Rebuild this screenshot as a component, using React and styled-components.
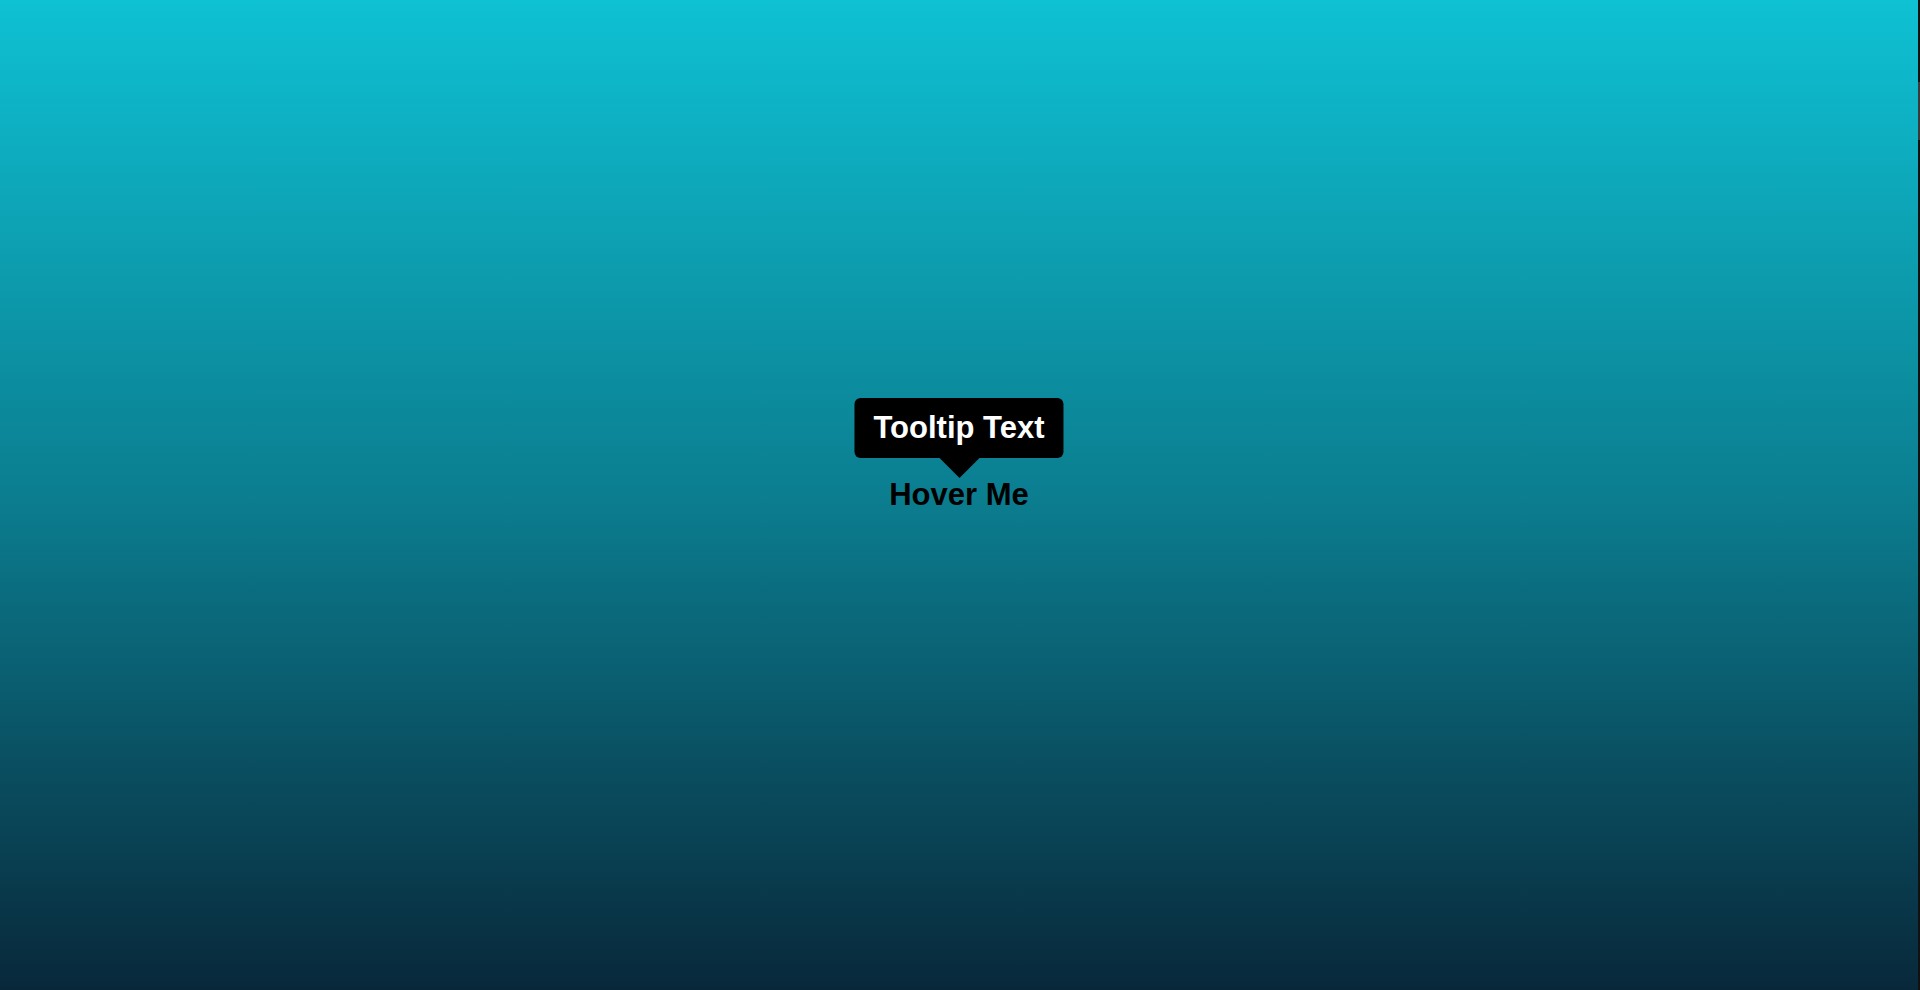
import React from 'react';
import styled, { createGlobalStyle } from 'styled-components';

const GlobalStyle = createGlobalStyle`
body {
  margin: 0;
  font-family: "Liberation Sans", Arial, sans-serif;
  overflow: hidden;
}
`

function App() {
  return (
    <>
      <GlobalStyle />
      <Screen>
        <Page>
          <Target>
            Hover Me
            <Tooltip>Tooltip Text</Tooltip>
          </Target>
        </Page>
        <Rail>
          <Thumb />
        </Rail>
      </Screen>
    </>
  )
}

export default App;

const Screen = styled.div`
display: flex;
height: 100vh;
`
const Page = styled.div`
flex: 1;
display: flex;
align-items: center;
justify-content: center;
background: linear-gradient(to bottom, #0ec1d3 0%, #0b7e90 50%, #08283a 100%);
`
const Rail = styled.div`
width: 2px;
background: #111;
`
const Thumb = styled.div`
margin-top: 82px;
height: 58px;
background: #3a3a3a;
`
const Target = styled.div`
position: relative;
font-size: 31px;
font-weight: 700;
color: #000;
cursor: pointer;
`
const Tooltip = styled.span`
position: absolute;
left: 50%;
bottom: calc(100% + 19px);
transform: translateX(-50%);
white-space: nowrap;
background: #000;
color: #fff;
padding: 12px 19px;
border-radius: 6px;
font-size: 31px;
font-weight: 700;

&::after {
  content: '';
  position: absolute;
  top: 100%;
  left: 50%;
  margin-left: -20px;
  border: 20px solid transparent;
  border-top-color: #000;
  border-bottom: 0;
}
`
